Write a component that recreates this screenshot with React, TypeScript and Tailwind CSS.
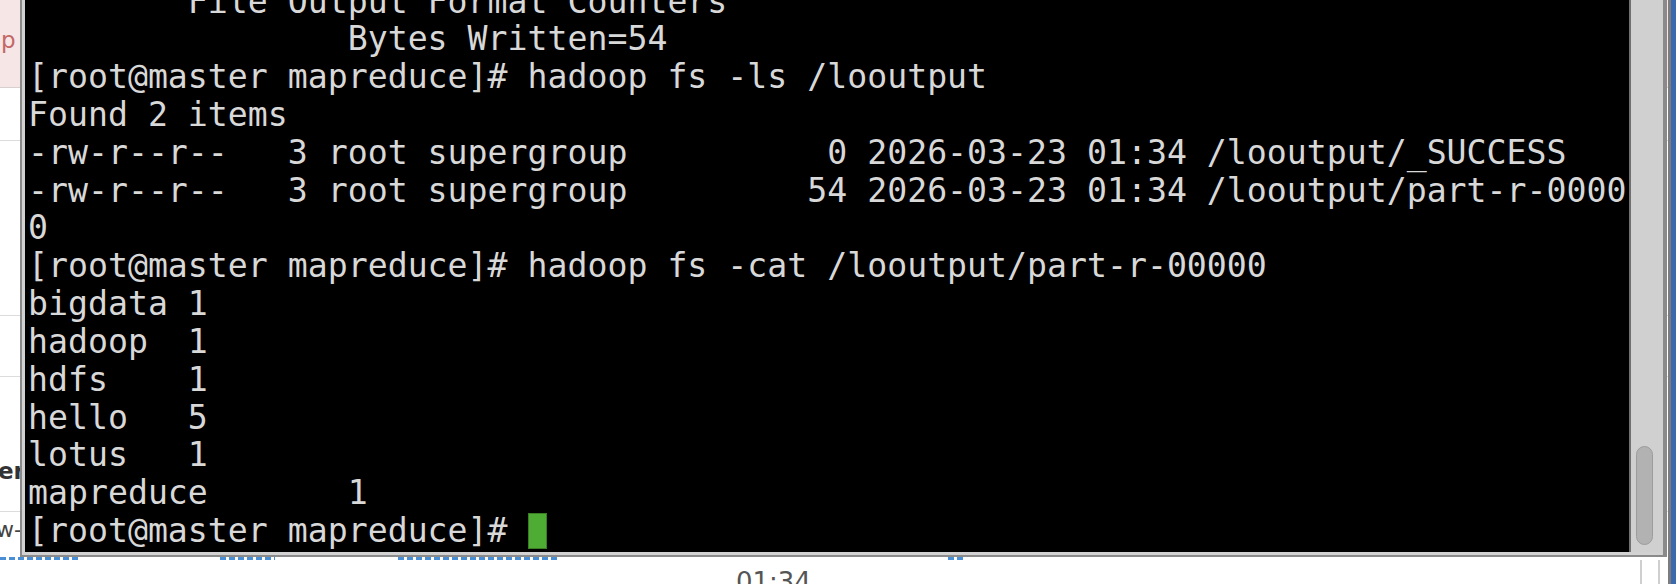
const lines = [
  '        File Output Format Counters ',
  '                Bytes Written=54',
  '[root@master mapreduce]# hadoop fs -ls /looutput',
  'Found 2 items',
  '-rw-r--r--   3 root supergroup          0 2026-03-23 01:34 /looutput/_SUCCESS',
  '-rw-r--r--   3 root supergroup         54 2026-03-23 01:34 /looutput/part-r-0000',
  '0',
  '[root@master mapreduce]# hadoop fs -cat /looutput/part-r-00000',
  'bigdata 1',
  'hadoop  1',
  'hdfs    1',
  'hello   5',
  'lotus   1',
  'mapreduce       1',
];

function PageBehind() {
  return (
    <div className="flex h-full w-full">
      <div className="flex min-h-0 flex-1 flex-col bg-white font-['DejaVu_Sans',sans-serif]">
        {/* table rows peeking out at the left edge */}
        <div className="flex h-[88px] shrink-0 items-start border-b border-[#d8d0d0] bg-[#f7e6e6] pt-[26px] pl-[1px]">
          <span className="text-[23px] leading-[28px] text-[#c46868]">p</span>
        </div>
        <div className="h-[53px] shrink-0 border-b border-[#dcdcdc]" />
        <div className="h-[175px] shrink-0 border-b border-[#dcdcdc]" />
        <div className="h-[61px] shrink-0 border-b border-[#dcdcdc]" />
        <div className="flex h-[135px] shrink-0 items-end border-b border-[#dcdcdc] pb-[26px]">
          <span className="-ml-[2px] text-[23px] font-bold leading-[28px] text-[#333]">er</span>
        </div>
        <div className="flex h-[45px] shrink-0 items-start pt-[6px]">
          <span className="-ml-[4px] text-[22px] leading-[24px] text-[#444]">w-</span>
        </div>
        {/* dotted link underlines */}
        <div className="flex h-[3px] shrink-0">
          <div className="w-[79px] bg-[repeating-linear-gradient(90deg,#4a8fd6_0_6px,transparent_6px_9px)]" />
          <div className="w-[141px]" />
          <div className="w-[55px] bg-[repeating-linear-gradient(90deg,#4a8fd6_0_6px,transparent_6px_9px)]" />
          <div className="w-[123px]" />
          <div className="w-[161px] bg-[repeating-linear-gradient(90deg,#4a8fd6_0_6px,transparent_6px_9px)]" />
          <div className="w-[389px]" />
          <div className="w-[17px] bg-[repeating-linear-gradient(90deg,#4a8fd6_0_6px,transparent_6px_9px)]" />
        </div>
        <div className="flex min-h-0 flex-1 overflow-hidden">
          <div className="w-[736px] shrink-0" />
          <span className="shrink-0 pt-[9px] text-[26px] leading-[26px] text-[#555]">01:34</span>
          <div className="flex-1" />
          <div className="mr-[8px] flex w-[20px] justify-between">
            <div className="w-[2px] bg-[#cfcfcf]" />
            <div className="w-[2px] bg-[#cfcfcf]" />
          </div>
        </div>
      </div>
      {/* desktop edge */}
      <div className="w-[8px] border-l-[3px] border-[#7c7c7c] bg-[#3b69ad]" />
    </div>
  );
}

function Terminal() {
  return (
    <div className="absolute left-[20px] top-[-10px] flex h-[567px] w-[1647px] border-b-[2px] border-l-[2px] border-r-[4px] border-[#8a8a8a] bg-[#d2d2d2] pb-[3px] pl-[3px]">
      <div className="flex-1 overflow-hidden bg-black pl-[3px]">
        <div className="mt-[-7.5px] whitespace-pre font-['DejaVu_Sans_Mono',monospace] text-[33.2px] leading-[37.84px] text-[#d8d8d8]">
          {lines.map((l, i) => (
            <div key={i} className="h-[37.84px]">
              {l}
            </div>
          ))}
          <div className="flex h-[37.84px] items-start">
            <span>[root@master mapreduce]# </span>
            <span className="mt-[1px] h-[36px] w-[19px] border border-[#3b7d22] bg-[#4eab33]" />
          </div>
        </div>
      </div>
      {/* scrollbar trough */}
      <div className="flex w-[34px] flex-col justify-end border-l-[2px] border-[#707070] bg-[#d0d0d0] pb-[7px] pl-[5px]">
        <div className="h-[99px] w-[17px] rounded-full border border-[#9c9c9c] bg-[#b2b2b2]" />
      </div>
    </div>
  );
}

export default function App() {
  return (
    <div className="relative h-[584px] w-[1676px] overflow-hidden bg-white">
      <PageBehind />
      <Terminal />
    </div>
  );
}
